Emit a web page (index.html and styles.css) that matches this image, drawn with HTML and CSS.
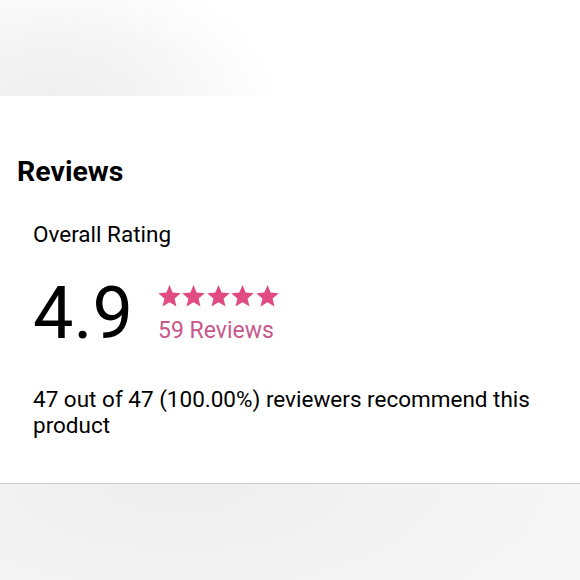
FILE: index.html
```html
<!DOCTYPE html>
<html>
<head>
<meta charset="utf-8">
<link rel="stylesheet" href="styles.css">
</head>
<body>
<div class="top-band"></div>
<section class="reviews">
  <h2 class="title">Reviews</h2>
  <div class="body">
    <div class="label">Overall Rating</div>
    <div class="rating-row">
      <div class="score">4.9</div>
      <div class="meta">
        <div class="stars">
          <svg viewBox="0 0 24 23" class="star"><path d="M12 0L15.29 7.87L23.8 8.57L17.33 14.13L19.3 22.4L12 18L4.7 22.4L6.67 14.13L0.2 8.57L8.71 7.87Z"/></svg>
          <svg viewBox="0 0 24 23" class="star"><path d="M12 0L15.29 7.87L23.8 8.57L17.33 14.13L19.3 22.4L12 18L4.7 22.4L6.67 14.13L0.2 8.57L8.71 7.87Z"/></svg>
          <svg viewBox="0 0 24 23" class="star"><path d="M12 0L15.29 7.87L23.8 8.57L17.33 14.13L19.3 22.4L12 18L4.7 22.4L6.67 14.13L0.2 8.57L8.71 7.87Z"/></svg>
          <svg viewBox="0 0 24 23" class="star"><path d="M12 0L15.29 7.87L23.8 8.57L17.33 14.13L19.3 22.4L12 18L4.7 22.4L6.67 14.13L0.2 8.57L8.71 7.87Z"/></svg>
          <svg viewBox="0 0 24 23" class="star"><path d="M12 0L15.29 7.87L23.8 8.57L17.33 14.13L19.3 22.4L12 18L4.7 22.4L6.67 14.13L0.2 8.57L8.71 7.87Z"/></svg>
        </div>
        <div class="count">59 Reviews</div>
      </div>
    </div>
    <p class="recommend">47 out of 47 (100.00%) reviewers recommend this product</p>
  </div>
</section>
<div class="bottom-band"></div>
</body>
</html>
```
FILE: styles.css
```css
html, body {
  margin: 0;
  padding: 0;
  background: #fff;
  font-family: Roboto, "Noto Sans", sans-serif;
  color: #000;
}
.top-band {
  height: 96px;
  background: radial-gradient(ellipse 230px 150px at 50px 110px, #eeeeee 0%, #f4f4f4 45%, #ffffff 100%);
}
.reviews {
  height: 387px;
  padding: 0 0 0 17px;
  box-sizing: border-box;
  overflow: hidden;
}
.title {
  margin: 0;
  padding-top: 58px;
  font-size: 28.5px;
  font-weight: 700;
  line-height: 36px;
}
.body {
  padding-left: 16px;
}
.label {
  margin-top: 30px;
  font-size: 22.5px;
  line-height: 28px;
}
.rating-row {
  display: flex;
  align-items: flex-start;
  margin-top: 30px;
}
.score {
  font-size: 72px;
  line-height: 72px;
  width: 125px;
}
.meta {
  display: flex;
  flex-direction: column;
  padding-top: 7px;
}
.stars {
  display: flex;
  gap: 1.4px;
}
.star {
  width: 23px;
  height: 22px;
  fill: #e04b83;
}
.count {
  color: #c8578b;
  font-size: 23px;
  line-height: 28px;
  margin-top: 10px;
}
.recommend {
  margin: 36px 0 0 0;
  font-size: 22.5px;
  line-height: 26px;
  padding-right: 30px;
}
.bottom-band {
  height: 97px;
  border-top: 1px solid #cccccc;
  background: radial-gradient(ellipse 650px 260px at 180px 0px, #eeeeee 0%, #f4f4f4 45%, #fafafa 100%);
}
```
